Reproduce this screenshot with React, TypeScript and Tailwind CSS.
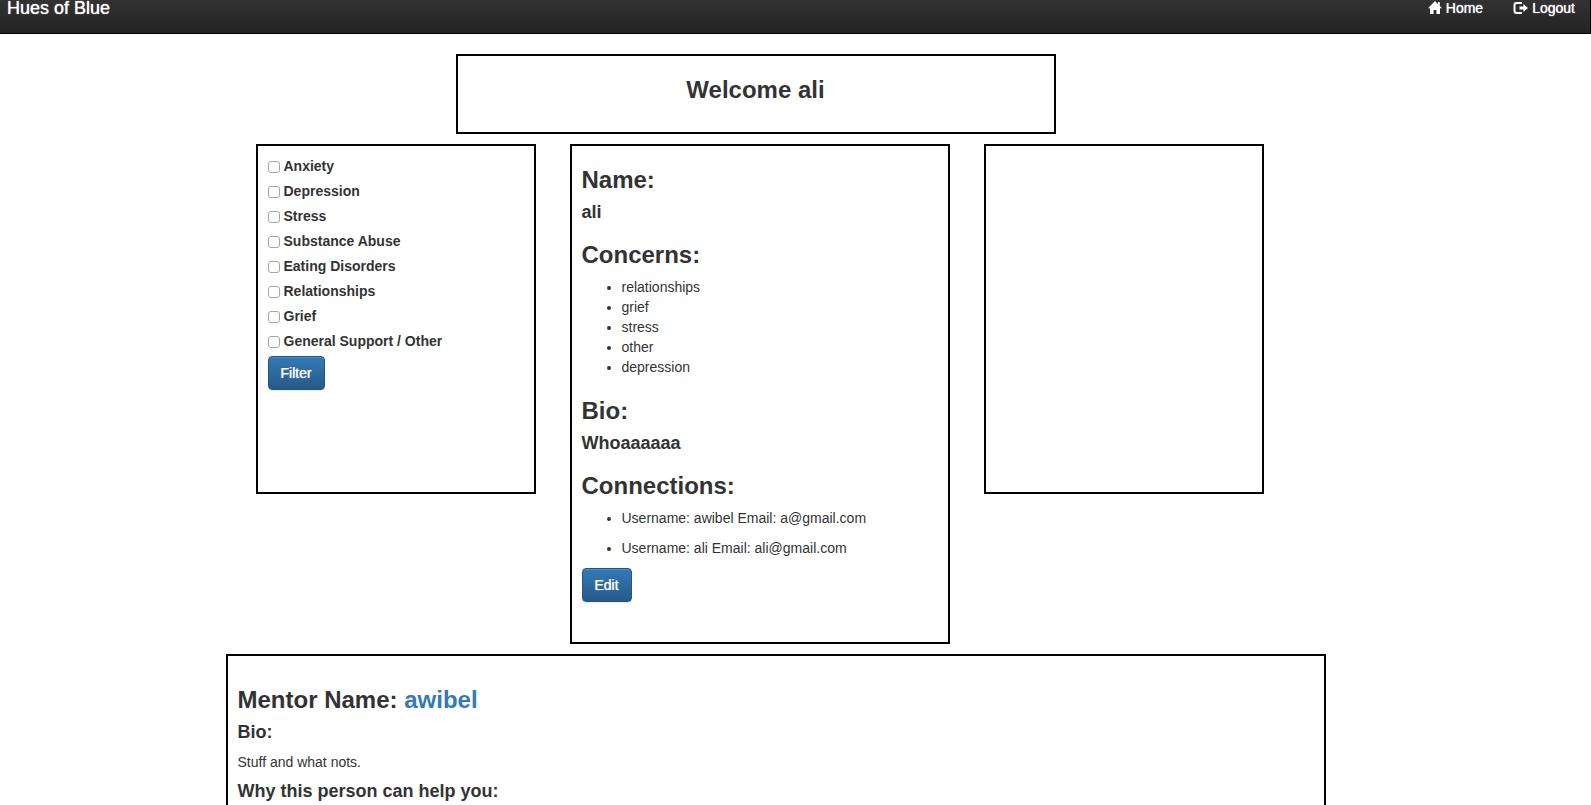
import type { ReactNode } from "react";

const filters = [
  "Anxiety",
  "Depression",
  "Stress",
  "Substance Abuse",
  "Eating Disorders",
  "Relationships",
  "Grief",
  "General Support / Other",
];
const concerns = ["relationships", "grief", "stress", "other", "depression"];
const connections = [
  { username: "awibel", email: "a@gmail.com" },
  { username: "ali", email: "ali@gmail.com" },
];

function HomeIcon() {
  return (
    <svg viewBox="0 0 14 15" className="h-[15px] w-3.5" fill="currentColor" aria-hidden="true">
      <path d="M7 1 0 8.2h2V14h3.6V10h2.8v4H12V8.2h2L11.8 5.9V2H10v2.1z" />
    </svg>
  );
}

function LogoutIcon() {
  return (
    <svg viewBox="0 0 15 15" className="h-[15px] w-[15px]" fill="currentColor" aria-hidden="true">
      <path d="M9 2H3.5A3 3 0 0 0 .5 5v6a3 3 0 0 0 3 3H9v-1.9H3.8a1.3 1.3 0 0 1-1.3-1.3V5.2a1.3 1.3 0 0 1 1.3-1.3H9z" />
      <path d="M10.5 4v2.4H6.5v3.2h4V12L15 8z" />
    </svg>
  );
}

function PrimaryButton({ children }: { children: ReactNode }) {
  return (
    <button
      type="button"
      className="rounded border border-[#245580] bg-linear-to-b from-[#337ab7] to-[#265a88] px-3 py-1.5 text-white shadow-[inset_0_1px_0_rgba(255,255,255,0.15),0_1px_1px_rgba(0,0,0,0.075)] [text-shadow:0_0_1px_#fff,0_-1px_0_rgba(0,0,0,0.2)]"
    >
      {children}
    </button>
  );
}

function Title({ children }: { children: ReactNode }) {
  return <h3 className="mb-[9px] text-2xl leading-[26px] font-bold">{children}</h3>;
}

function Subtitle({ children }: { children: ReactNode }) {
  return <h4 className="mb-2.5 text-lg leading-5 font-bold">{children}</h4>;
}

export default function App() {
  return (
    <div className="h-screen overflow-hidden bg-white font-['Liberation_Sans',Arial,sans-serif] text-sm leading-5 text-[#333]">
      <header className="flex h-[34px] items-start justify-between border-r border-b border-black bg-linear-to-b from-[#333] to-[#222] pr-[15px] pl-[7px] text-white [text-shadow:0_0_1px_#fff]">
        <a href="#top" className="text-lg leading-4">
          Hues of Blue
        </a>
        <nav className="flex gap-[30px] leading-4">
          <a href="#home" className="flex gap-1">
            <HomeIcon />
            Home
          </a>
          <a href="#logout" className="flex gap-1">
            <LogoutIcon />
            Logout
          </a>
        </nav>
      </header>

      <main className="mx-auto mt-5 flex max-w-[1140px] flex-col gap-2.5">
        <section className="ml-[230px] min-h-20 w-[600px] border-2 border-black px-2.5 pt-[21px] text-center">
          <Title>Welcome ali</Title>
        </section>

        <div className="ml-[30px] flex items-start gap-[34px]">
          <form className="min-h-[350px] w-[280px] border-2 border-black p-2.5">
            {filters.map((name) => (
              <label key={name} className="mb-[5px] flex items-center gap-1 font-bold">
                <input
                  type="checkbox"
                  className="mt-0.5 h-3 w-3 appearance-none rounded-[3px] border border-[#a6a6a6] bg-white checked:bg-[#337ab7]"
                />
                {name}
              </label>
            ))}
            <PrimaryButton>Filter</PrimaryButton>
          </form>

          <section className="min-h-[500px] w-[380px] border-2 border-black px-2.5 pt-[21px]">
            <Title>Name:</Title>
            <div className="mb-5">
              <Subtitle>ali</Subtitle>
            </div>
            <Title>Concerns:</Title>
            <ul className="mb-[21px] list-disc pl-10">
              {concerns.map((concern) => (
                <li key={concern}>{concern}</li>
              ))}
            </ul>
            <Title>Bio:</Title>
            <div className="mb-5">
              <Subtitle>Whoaaaaaa</Subtitle>
            </div>
            <Title>Connections:</Title>
            <ul className="mb-2.5 flex list-disc flex-col gap-2.5 pl-10">
              {connections.map(({ username, email }) => (
                <li key={username}>
                  Username: {username} Email: {email}
                </li>
              ))}
            </ul>
            <PrimaryButton>Edit</PrimaryButton>
          </section>

          <aside className="min-h-[350px] w-[280px] border-2 border-black" />
        </div>

        <section className="min-h-[350px] w-[1100px] border-2 border-black px-2.5 pt-[31px]">
          <Title>
            Mentor Name:{" "}
            <a href="#awibel" className="text-[#337ab7]">
              awibel
            </a>
          </Title>
          <Subtitle>Bio:</Subtitle>
          <p className="mb-[9px]">Stuff and what nots.</p>
          <Subtitle>Why this person can help you:</Subtitle>
        </section>
      </main>
    </div>
  );
}
